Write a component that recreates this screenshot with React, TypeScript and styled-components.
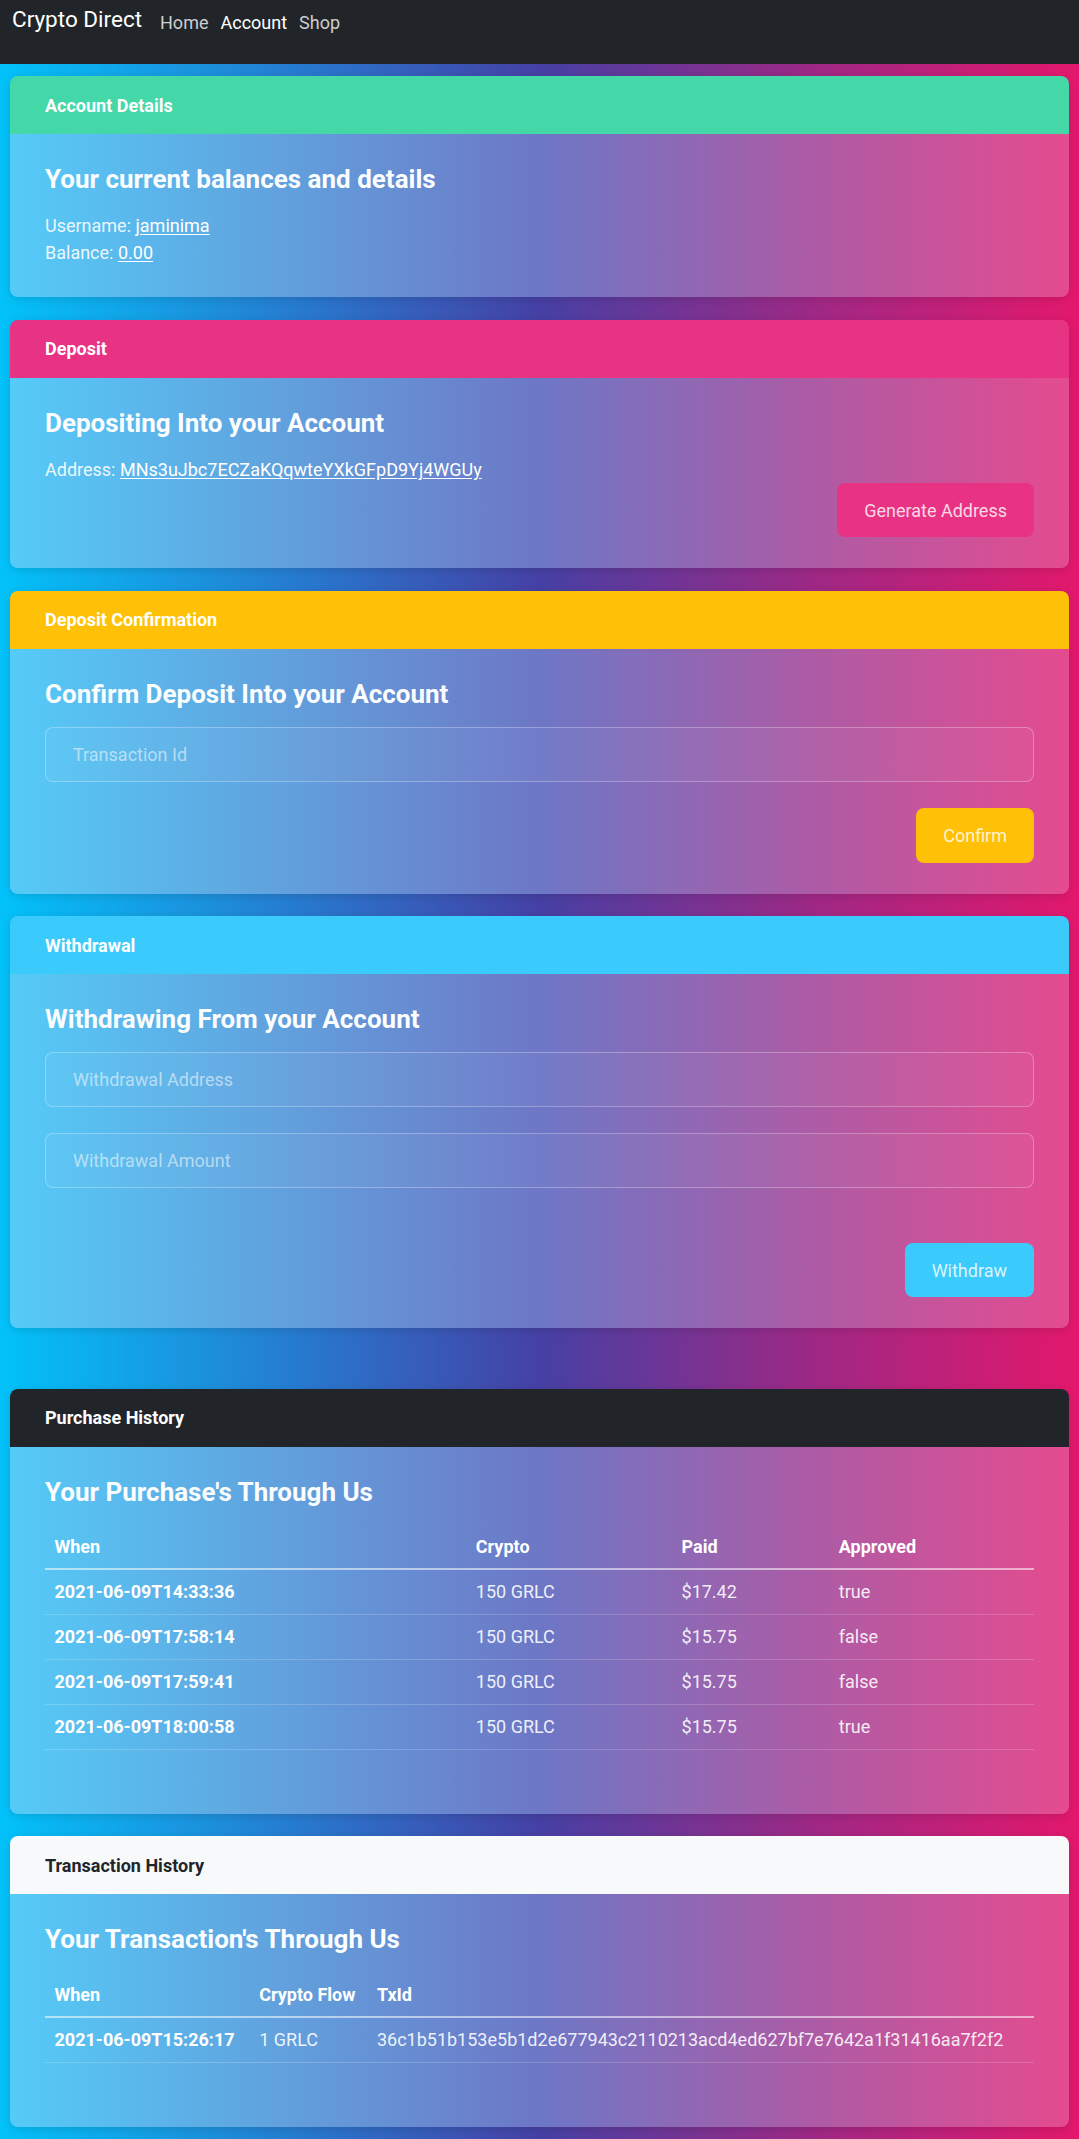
import React from "react";
import styled, { createGlobalStyle } from "styled-components";

const GlobalStyle = createGlobalStyle`
  html, body {
    margin: 0;
    padding: 0;
  }
  body {
    min-height: 100vh;
    font-family: Roboto, "Liberation Sans", Arial, sans-serif;
    font-size: 18px;
    line-height: 1.5;
    color: #fff;
    background: linear-gradient(
      90deg,
      #03c2f9 0%,
      #2a74cb 30%,
      #4640a4 50%,
      #a02884 76%,
      #e3186c 100%
    );
  }
  * {
    box-sizing: border-box;
  }
`;

type Tone = "green" | "pink" | "yellow" | "cyan" | "dark" | "light";

const tones: Record<Tone, { bg: string; fg: string }> = {
  green: { bg: "#44d7a8", fg: "#ffffff" },
  pink: { bg: "#e83283", fg: "#ffffff" },
  yellow: { bg: "#ffc107", fg: "#ffffff" },
  cyan: { bg: "#3bcafc", fg: "#ffffff" },
  dark: { bg: "#212529", fg: "#ffffff" },
  light: { bg: "#f8f9fa", fg: "#212529" },
};

const Navbar = styled.nav`
  height: 64px;
  background: #212529;
  display: flex;
  align-items: flex-start;
  padding: 3px 12px 0;
`;

const Brand = styled.a`
  font-size: 22.5px;
  line-height: 1.5;
  color: #fff;
  text-decoration: none;
  margin-right: 18px;
`;

const NavLinks = styled.div`
  display: flex;
  gap: 12px;
  padding-top: 6px;
`;

const NavLink = styled.a<{ $active?: boolean }>`
  font-size: 18px;
  line-height: 1.5;
  color: ${p => (p.$active ? "#ffffff" : "rgba(255, 255, 255, 0.78)")};
  text-decoration: none;
`;

const Main = styled.main`
  display: flex;
  flex-direction: column;
  gap: 22.5px;
  padding: 12px 10px 14px;
`;

const Card = styled.section<{ $gapAbove?: number }>`
  border-radius: 8px;
  overflow: hidden;
  margin-top: ${p => p.$gapAbove || 0}px;
  box-shadow: 0 2px 8px rgba(0, 0, 0, 0.12);
`;

const CardHeader = styled.header<{ $tone: Tone }>`
  height: 58px;
  display: flex;
  align-items: center;
  padding: 0 35px;
  font-size: 18px;
  font-weight: 700;
  background: ${p => tones[p.$tone].bg};
  color: ${p => tones[p.$tone].fg};
`;

const CardBody = styled.div`
  padding: 30px 35px 31px;
  background: linear-gradient(
    90deg,
    #55cbf8 0%,
    #61a2de 25%,
    #6d77c6 50%,
    #ab5ca6 75%,
    #e54b8f 100%
  );
`;

const Title = styled.h4`
  margin: 0 0 17px;
  font-size: 26px;
  line-height: 1.2;
  font-weight: 700;
  color: #fbfdff;
`;

const Line = styled.p`
  margin: 0;
  color: rgba(255, 255, 255, 0.9);
`;

const Value = styled.a`
  color: #fff;
  text-decoration: underline;
  text-underline-offset: 2px;
`;

const Input = styled.input<{ $gapAfter?: number }>`
  display: block;
  width: 100%;
  height: 55px;
  margin: 0 0 ${p => p.$gapAfter || 0}px;
  padding: 0 27px;
  border: 1px solid rgba(255, 255, 255, 0.28);
  border-radius: 8px;
  background: rgba(255, 255, 255, 0.04);
  font: inherit;
  color: #fff;
  outline: none;
  &::placeholder {
    color: rgba(255, 255, 255, 0.55);
  }
`;

const Actions = styled.div<{ $gapAbove?: number }>`
  display: flex;
  justify-content: flex-end;
  margin-top: ${p => p.$gapAbove || 0}px;
`;

const ActionButton = styled.button<{ $tone: Tone }>`
  height: 54.5px;
  padding: 0 27px;
  border: none;
  border-radius: 8px;
  font: inherit;
  background: ${p => tones[p.$tone].bg};
  color: rgba(255, 255, 255, 0.82);
  cursor: pointer;
`;

const Table = styled.table`
  width: 100%;
  border-collapse: collapse;
  margin: 16px 0 33px;
  color: rgba(255, 255, 255, 0.9);
`;

const HeadCell = styled.th<{ $w?: string }>`
  width: ${p => p.$w || "auto"};
  text-align: left;
  font-weight: 700;
  color: #fff;
  padding: 8px 9.5px;
  border-bottom: 2px solid rgba(255, 255, 255, 0.55);
`;

const RowHead = styled.th`
  text-align: left;
  font-weight: 700;
  color: #fff;
  padding: 8.5px 9.5px;
  border-bottom: 1px solid rgba(255, 255, 255, 0.18);
`;

const Cell = styled.td`
  padding: 8.5px 9.5px;
  border-bottom: 1px solid rgba(255, 255, 255, 0.18);
`;

const purchases = [
  { when: "2021-06-09T14:33:36", crypto: "150 GRLC", paid: "$17.42", approved: "true" },
  { when: "2021-06-09T17:58:14", crypto: "150 GRLC", paid: "$15.75", approved: "false" },
  { when: "2021-06-09T17:59:41", crypto: "150 GRLC", paid: "$15.75", approved: "false" },
  { when: "2021-06-09T18:00:58", crypto: "150 GRLC", paid: "$15.75", approved: "true" },
];

const transactions = [
  {
    when: "2021-06-09T15:26:17",
    flow: "1 GRLC",
    txid: "36c1b51b153e5b1d2e677943c2110213acd4ed627bf7e7642a1f31416aa7f2f2",
  },
];

export default function App() {
  return (
    <>
      <GlobalStyle />
      <Navbar>
        <Brand href="#">Crypto Direct</Brand>
        <NavLinks>
          <NavLink href="#">Home</NavLink>
          <NavLink href="#" $active>
            Account
          </NavLink>
          <NavLink href="#">Shop</NavLink>
        </NavLinks>
      </Navbar>

      <Main>
        <Card>
          <CardHeader $tone="green">Account Details</CardHeader>
          <CardBody>
            <Title>Your current balances and details</Title>
            <Line>
              Username: <Value href="#">jaminima</Value>
            </Line>
            <Line>
              Balance: <Value href="#">0.00</Value>
            </Line>
          </CardBody>
        </Card>

        <Card>
          <CardHeader $tone="pink">Deposit</CardHeader>
          <CardBody>
            <Title>Depositing Into your Account</Title>
            <Line>
              Address: <Value href="#">MNs3uJbc7ECZaKQqwteYXkGFpD9Yj4WGUy</Value>
            </Line>
            <Actions>
              <ActionButton $tone="pink">Generate Address</ActionButton>
            </Actions>
          </CardBody>
        </Card>

        <Card>
          <CardHeader $tone="yellow">Deposit Confirmation</CardHeader>
          <CardBody>
            <Title>Confirm Deposit Into your Account</Title>
            <Input placeholder="Transaction Id" />
            <Actions $gapAbove={26}>
              <ActionButton $tone="yellow">Confirm</ActionButton>
            </Actions>
          </CardBody>
        </Card>

        <Card>
          <CardHeader $tone="cyan">Withdrawal</CardHeader>
          <CardBody>
            <Title>Withdrawing From your Account</Title>
            <Input placeholder="Withdrawal Address" $gapAfter={25.5} />
            <Input placeholder="Withdrawal Amount" />
            <Actions $gapAbove={55}>
              <ActionButton $tone="cyan">Withdraw</ActionButton>
            </Actions>
          </CardBody>
        </Card>

        <Card $gapAbove={38}>
          <CardHeader $tone="dark">Purchase History</CardHeader>
          <CardBody>
            <Title>Your Purchase's Through Us</Title>
            <Table>
              <thead>
                <tr>
                  <HeadCell $w="42.6%">When</HeadCell>
                  <HeadCell $w="20.8%">Crypto</HeadCell>
                  <HeadCell $w="15.9%">Paid</HeadCell>
                  <HeadCell>Approved</HeadCell>
                </tr>
              </thead>
              <tbody>
                {purchases.map(p => (
                  <tr key={p.when}>
                    <RowHead>{p.when}</RowHead>
                    <Cell>{p.crypto}</Cell>
                    <Cell>{p.paid}</Cell>
                    <Cell>{p.approved}</Cell>
                  </tr>
                ))}
              </tbody>
            </Table>
          </CardBody>
        </Card>

        <Card>
          <CardHeader $tone="light">Transaction History</CardHeader>
          <CardBody>
            <Title>Your Transaction's Through Us</Title>
            <Table>
              <thead>
                <tr>
                  <HeadCell $w="20.7%">When</HeadCell>
                  <HeadCell $w="11.9%">Crypto Flow</HeadCell>
                  <HeadCell>TxId</HeadCell>
                </tr>
              </thead>
              <tbody>
                {transactions.map(t => (
                  <tr key={t.txid}>
                    <RowHead>{t.when}</RowHead>
                    <Cell>{t.flow}</Cell>
                    <Cell>{t.txid}</Cell>
                  </tr>
                ))}
              </tbody>
            </Table>
          </CardBody>
        </Card>
      </Main>
    </>
  );
}
